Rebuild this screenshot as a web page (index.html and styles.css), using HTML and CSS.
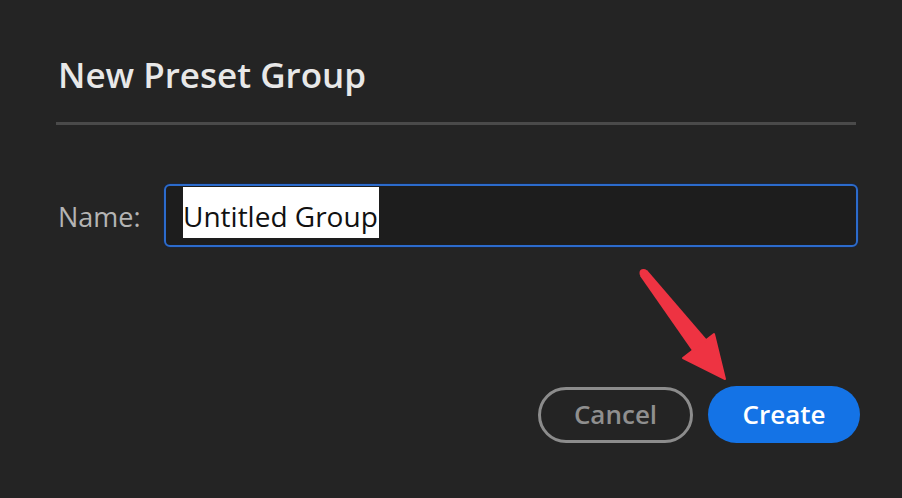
FILE: index.html
```html
<!DOCTYPE html>
<html>
<head>
<meta charset="utf-8">
<link rel="stylesheet" href="styles.css">
</head>
<body>
<div class="dialog">
  <h1 class="title">New Preset Group</h1>
  <div class="divider"></div>
  <div class="field">
    <label class="label">Name:</label>
    <div class="input"><span class="sel">Untitled Group</span></div>
  </div>
  <div class="actions">
    <button class="btn cancel">Cancel</button>
    <button class="btn create">Create</button>
  </div>
  <svg class="arrow" width="902" height="498" viewBox="0 0 902 498">
    <polygon points="640,276 647,270 708,341 693,352" fill="#ee3342"/>
    <circle cx="643.5" cy="273" r="4" fill="#ee3342"/>
    <polygon points="683,358 714,334 725,379" fill="#ee3342" stroke="#ee3342" stroke-width="2" stroke-linejoin="round"/>
  </svg>
</div>
</body>
</html>
```

FILE: styles.css
```css
html, body {
  margin: 0;
  padding: 0;
  background: #242424;
}
body {
  font-family: "Open Sans", "DejaVu Sans", sans-serif;
  width: 902px;
  height: 498px;
  overflow: hidden;
}
.dialog {
  position: relative;
  padding: 55px 42px 0 56px;
  width: 804px;
}
.title {
  margin: 0 0 27px 2px;
  font-size: 35px;
  line-height: 40px;
  font-weight: 600;
  color: #e8e8e8;
}
.divider {
  height: 3px;
  background: #4a4a4a;
  margin-right: 4px;
}
.field {
  display: flex;
  margin-top: 59px;
  margin-right: 2px;
}
.label {
  width: 106px;
  margin-left: 2px;
  padding-top: 3px;
  font-size: 27px;
  line-height: 60px;
  color: #b4b4b4;
}
.input {
  flex: 1;
  border: 2px solid #2c6bcc;
  border-radius: 6px;
  background: #1d1d1d;
  padding: 1px 17px 7px;
  box-shadow: 0 0 0 1px rgba(20, 40, 80, 0.5);
}
.sel {
  display: inline-block;
  background: #ffffff;
  color: #111111;
  font-size: 28px;
  line-height: 44px;
  padding: 7px 1px 0 0;
}
.actions {
  display: flex;
  justify-content: flex-end;
  align-items: flex-start;
  gap: 15px;
  margin-top: 139px;
}
.btn {
  font-family: "Open Sans", "DejaVu Sans", sans-serif;
  font-size: 26px;
  font-weight: 600;
  border-radius: 29px;
  box-sizing: border-box;
  padding: 0 0 2px;
  cursor: pointer;
}
.cancel {
  width: 155px;
  height: 56px;
  margin-top: 1px;
  border: 3px solid #8c8c8c;
  background: transparent;
  color: #8f8f8f;
}
.create {
  width: 152px;
  height: 57px;
  border: none;
  background: #1473e6;
  color: #ffffff;
}
.arrow {
  position: absolute;
  left: 0;
  top: 0;
  pointer-events: none;
}
```
